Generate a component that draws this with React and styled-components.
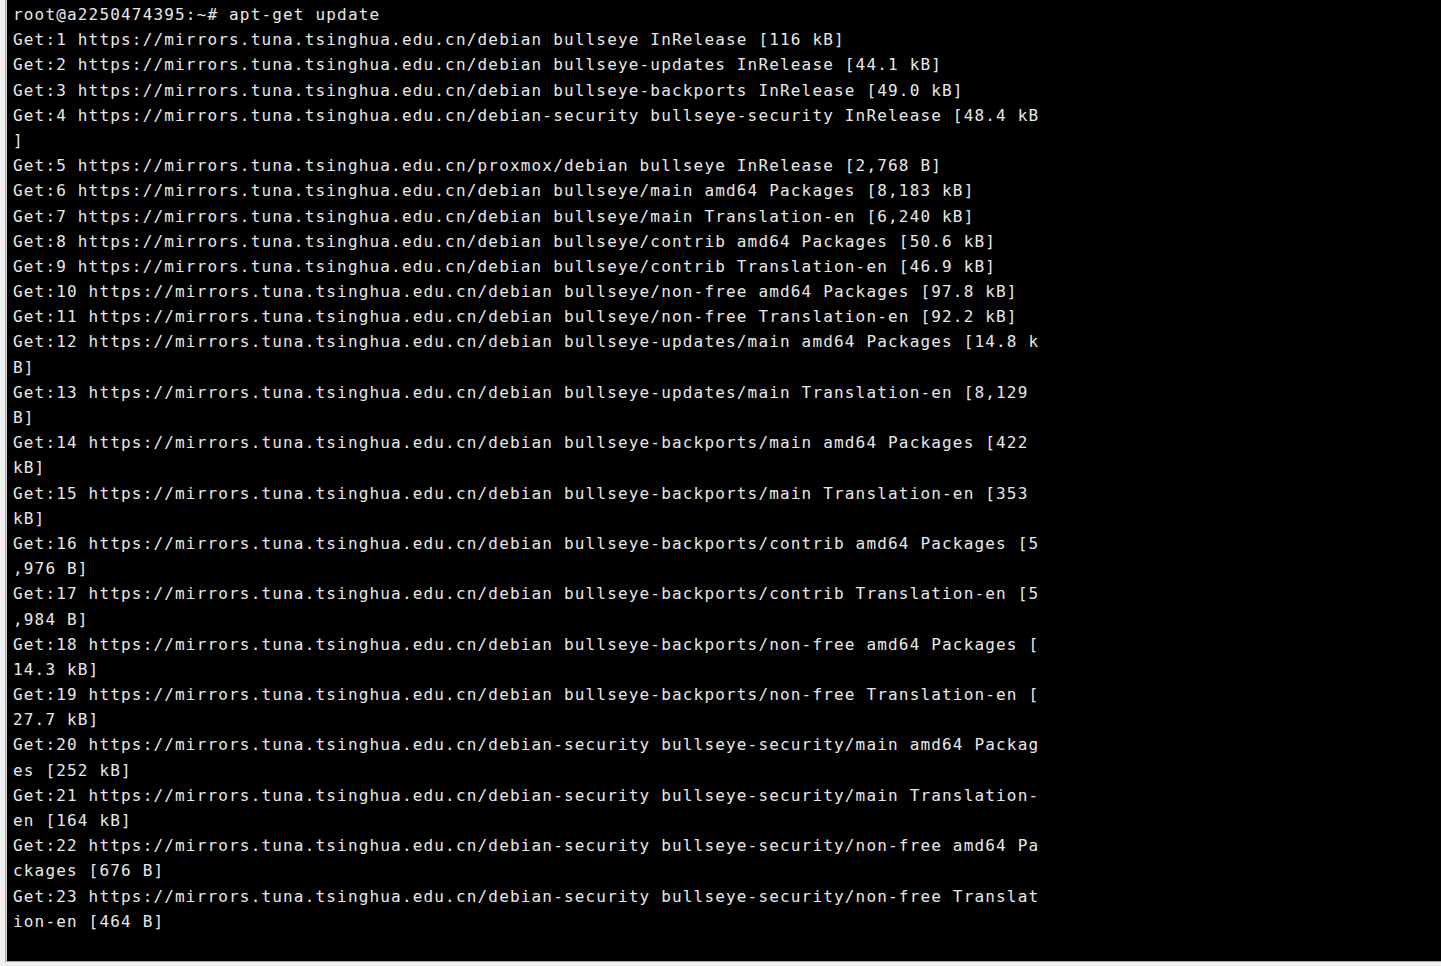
import React from "react";
import styled, { createGlobalStyle } from "styled-components";

const Global = createGlobalStyle`
  html, body { margin: 0; padding: 0; background: #f0f0f0; overflow: hidden; }
  #root { width: 1441px; height: 966px; }
`;

const Frame = styled.div`
  display: flex;
  flex-direction: column;
  width: 1441px;
  height: 966px;
  background: #f0f0f0;
`;

const Body = styled.div`
  display: flex;
  height: 962px;
`;

const SideStrip = styled.div`
  width: 5px;
  background: #f0f0f0;
  border-right: 1px solid #a8a8a8;
  flex: none;
`;

const Terminal = styled.pre`
  flex: 1;
  margin: 0;
  background: #000;
  color: #e8e8e8;
  border-left: 1px solid #d8d8d8;
  border-bottom: 1px solid #a8a8a8;
  padding: 2px 0 0 6px;
  font-family: "DejaVu Sans Mono", "Liberation Mono", monospace;
  font-size: 16px;
  letter-spacing: 1.17px;
  line-height: 25.2px;
  overflow: hidden;
  white-space: pre;
`;

const Line = styled.div`
  height: 25.2px;
`;

const lines = [
  "root@a2250474395:~# apt-get update",
  "Get:1 https://mirrors.tuna.tsinghua.edu.cn/debian bullseye InRelease [116 kB]",
  "Get:2 https://mirrors.tuna.tsinghua.edu.cn/debian bullseye-updates InRelease [44.1 kB]",
  "Get:3 https://mirrors.tuna.tsinghua.edu.cn/debian bullseye-backports InRelease [49.0 kB]",
  "Get:4 https://mirrors.tuna.tsinghua.edu.cn/debian-security bullseye-security InRelease [48.4 kB",
  "]",
  "Get:5 https://mirrors.tuna.tsinghua.edu.cn/proxmox/debian bullseye InRelease [2,768 B]",
  "Get:6 https://mirrors.tuna.tsinghua.edu.cn/debian bullseye/main amd64 Packages [8,183 kB]",
  "Get:7 https://mirrors.tuna.tsinghua.edu.cn/debian bullseye/main Translation-en [6,240 kB]",
  "Get:8 https://mirrors.tuna.tsinghua.edu.cn/debian bullseye/contrib amd64 Packages [50.6 kB]",
  "Get:9 https://mirrors.tuna.tsinghua.edu.cn/debian bullseye/contrib Translation-en [46.9 kB]",
  "Get:10 https://mirrors.tuna.tsinghua.edu.cn/debian bullseye/non-free amd64 Packages [97.8 kB]",
  "Get:11 https://mirrors.tuna.tsinghua.edu.cn/debian bullseye/non-free Translation-en [92.2 kB]",
  "Get:12 https://mirrors.tuna.tsinghua.edu.cn/debian bullseye-updates/main amd64 Packages [14.8 k",
  "B]",
  "Get:13 https://mirrors.tuna.tsinghua.edu.cn/debian bullseye-updates/main Translation-en [8,129",
  "B]",
  "Get:14 https://mirrors.tuna.tsinghua.edu.cn/debian bullseye-backports/main amd64 Packages [422",
  "kB]",
  "Get:15 https://mirrors.tuna.tsinghua.edu.cn/debian bullseye-backports/main Translation-en [353",
  "kB]",
  "Get:16 https://mirrors.tuna.tsinghua.edu.cn/debian bullseye-backports/contrib amd64 Packages [5",
  ",976 B]",
  "Get:17 https://mirrors.tuna.tsinghua.edu.cn/debian bullseye-backports/contrib Translation-en [5",
  ",984 B]",
  "Get:18 https://mirrors.tuna.tsinghua.edu.cn/debian bullseye-backports/non-free amd64 Packages [",
  "14.3 kB]",
  "Get:19 https://mirrors.tuna.tsinghua.edu.cn/debian bullseye-backports/non-free Translation-en [",
  "27.7 kB]",
  "Get:20 https://mirrors.tuna.tsinghua.edu.cn/debian-security bullseye-security/main amd64 Packag",
  "es [252 kB]",
  "Get:21 https://mirrors.tuna.tsinghua.edu.cn/debian-security bullseye-security/main Translation-",
  "en [164 kB]",
  "Get:22 https://mirrors.tuna.tsinghua.edu.cn/debian-security bullseye-security/non-free amd64 Pa",
  "ckages [676 B]",
  "Get:23 https://mirrors.tuna.tsinghua.edu.cn/debian-security bullseye-security/non-free Translat",
  "ion-en [464 B]",
];

export default function App() {
  return (
    <Frame>
      <Global />
      <Body>
        <SideStrip />
        <Terminal>
          {lines.map((l, i) => (
            <Line key={i}>{l}</Line>
          ))}
        </Terminal>
      </Body>
    </Frame>
  );
}
